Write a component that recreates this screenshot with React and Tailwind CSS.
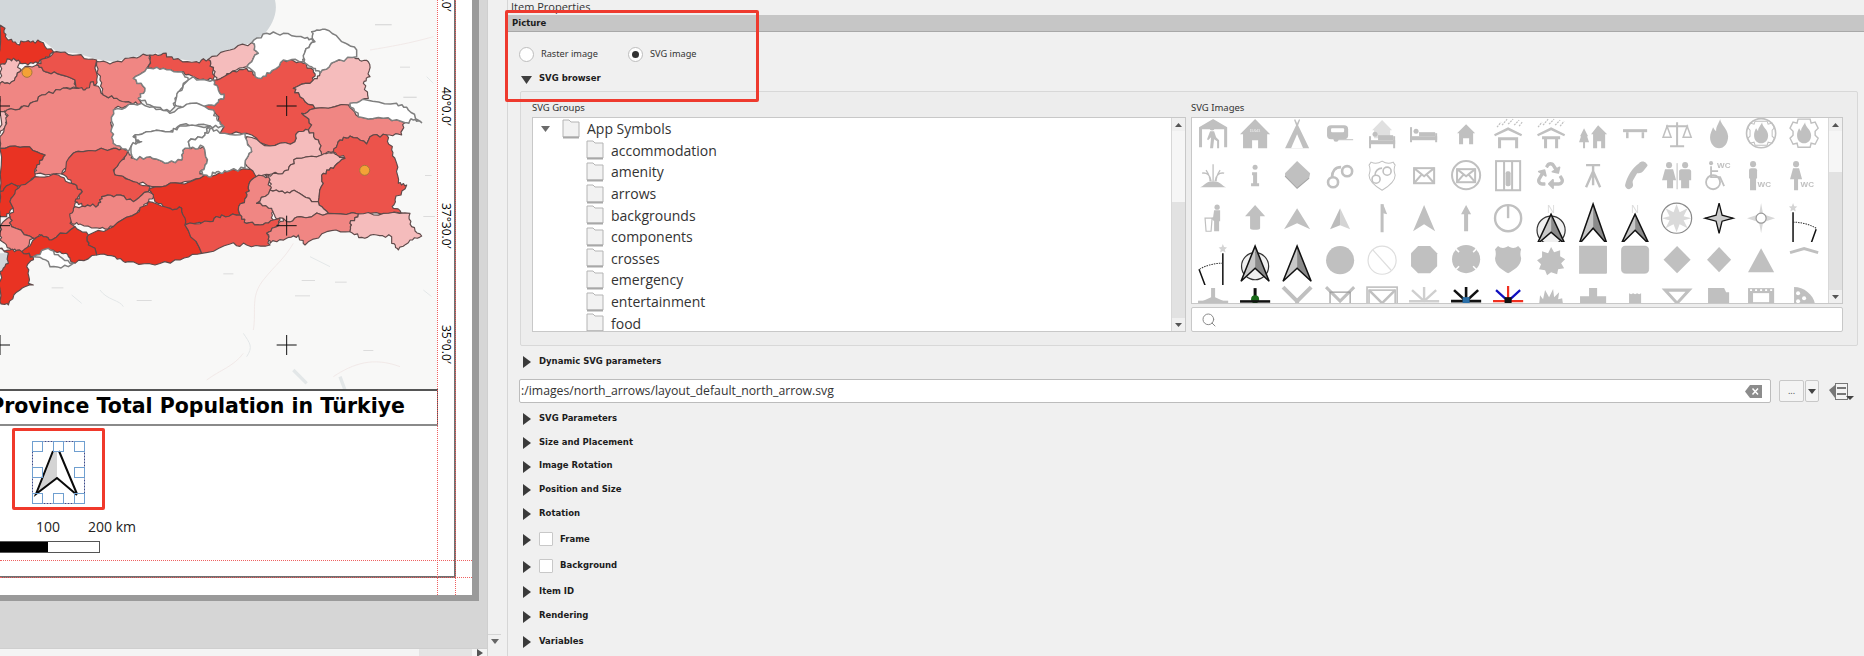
import React from 'react';
import { Search } from 'lucide-react';
import { FaRecycle } from 'react-icons/fa';

// province shapes, traced in 3x map coordinates
const DARK = '#e93323';
const RED = '#ec534b';
const SALMON = '#f08683';
const PINK = '#f5bcbc';
const WHITE = '#ffffff';

const provinces = [
  [DARK, '0,75 15,85 20,115 50,132 85,122 120,125 160,155 135,178 100,190 60,190 45,178 0,195'],
  [PINK, '0,195 30,178 55,180 60,215 35,245 0,250'],
  [SALMON, '0,250 35,245 60,215 75,200 110,195 130,212 170,220 225,240 232,265 180,270 125,285 85,320 35,330 0,335'],
  [RED, '110,195 135,175 170,155 230,165 290,180 290,240 275,265 250,270 228,262 225,240 170,220 130,212'],
  [PINK, '0,335 20,335 20,375 0,400'],
  [SALMON, '20,330 85,320 125,285 180,270 230,265 255,270 280,245 310,285 350,295 395,312 345,325 335,380 340,430 385,450 340,445 250,455 215,465 215,490 185,522 105,522 110,495 135,465 75,440 0,445 0,410 20,370'],
  [SALMON, '290,185 340,187 400,172 450,165 450,190 440,205 400,235 435,265 415,295 425,310 395,310 350,295 310,285 300,240'],
  [RED, '450,165 490,160 520,178 590,185 625,178 640,210 640,240 590,235 570,225 545,215 490,205 445,205'],
  [PINK, '625,178 690,150 755,128 775,160 740,200 690,220 650,240 640,210'],
  [WHITE, '400,235 440,205 490,205 545,215 565,240 550,250 525,295 525,320 510,335 460,320 415,295 435,265'],
  [WHITE, '565,240 580,230 590,240 640,240 655,270 672,290 650,310 610,320 570,310 545,325 525,310 530,290 550,255'],
  [WHITE, '340,330 400,312 460,320 510,340 575,310 640,330 650,355 672,380 630,378 540,375 510,395 440,395 400,410 420,425 395,435 385,455 340,430 335,385'],
  [WHITE, '395,435 425,425 400,410 440,395 510,395 540,378 630,378 615,405 565,425 570,445 555,445 545,480 495,490 450,470 400,475'],
  [SALMON, '385,455 400,475 450,470 495,490 545,480 555,445 565,445 610,440 620,490 600,515 615,535 540,550 470,560 400,545 340,520 345,505'],
  [WHITE, '565,425 615,405 630,385 660,400 735,400 755,455 735,490 735,505 680,515 650,515 625,530 600,515 620,490 610,440 570,445'],
  [DARK, '0,445 75,440 135,465 110,495 105,530 60,565 35,550 0,575'],
  [DARK, '0,575 35,550 55,560 30,605 40,625 20,650 0,650'],
  [RED, '30,605 55,565 105,530 175,525 215,550 247,575 225,610 210,670 225,680 155,720 125,705 100,715 35,680 30,650 40,625'],
  [RED, '215,465 250,455 340,445 385,450 340,510 345,525 400,545 450,560 445,575 400,605 350,585 305,590 295,615 255,620 225,605 247,575 215,550 185,522'],
  [SALMON, '210,650 225,620 255,620 295,615 305,590 350,585 400,605 445,575 465,585 440,610 410,640 340,680 300,685 240,672 215,670'],
  [DARK, '450,565 470,560 540,550 600,535 680,515 765,508 768,530 745,560 740,590 715,630 720,645 665,645 630,665 550,672 545,625 510,625 465,605 460,590'],
  [DARK, '265,705 340,680 410,640 445,605 510,625 545,625 555,675 605,760 540,780 465,795 385,785 345,770 290,765 285,745 265,735'],
  [DARK, '65,755 125,705 155,720 225,680 265,705 265,735 285,745 290,765 225,790 205,770 180,755 145,745 100,770'],
  [WHITE, '100,770 145,745 180,770 220,790 205,800 150,800 145,785'],
  [SALMON, '0,680 30,650 35,680 100,715 65,755 30,745 0,720'],
  [DARK, '0,745 30,750 65,755 100,770 80,800 85,850 100,855 60,870 25,915 0,905 0,815 25,790 25,760'],
  [RED, '640,240 690,220 740,205 775,235 810,220 850,180 900,185 940,210 940,240 880,265 900,290 945,325 905,340 935,375 925,390 890,400 885,425 810,438 740,400 660,400 672,380 650,345 610,320 650,310 672,290 655,270'],
  [WHITE, '740,200 775,160 755,128 800,100 850,100 915,115 945,125 915,155 910,185 850,180 810,220 775,235'],
  [WHITE, '945,125 935,95 975,88 1025,125 1070,150 1070,170 1005,185 960,220 940,205 912,185 915,155'],
  [PINK, '880,265 940,240 960,220 1005,185 1050,162 1075,175 1105,185 1110,230 1090,250 1105,295 1045,315 945,325 900,290'],
  [WHITE, '1050,310 1100,300 1190,310 1225,330 1265,368 1240,360 1215,368 1150,355 1075,350'],
  [SALMON, '905,340 945,325 1045,315 1075,350 1150,355 1215,368 1205,405 1160,405 1110,410 1100,432 1050,408 1020,420 1000,455 965,465 955,420 925,390 935,375'],
  [PINK, '740,410 810,438 885,425 890,400 925,390 955,420 965,465 890,475 865,510 835,522 790,525 770,532 735,490 755,455'],
  [PINK, '795,525 835,522 865,510 890,475 965,465 1000,458 1035,475 1000,505 970,520 970,550 955,605 935,605 890,575 855,580 810,570 810,540'],
  [RED, '1000,455 1020,420 1050,408 1100,432 1110,410 1160,405 1175,450 1190,490 1195,550 1220,555 1185,600 1180,625 1210,640 1075,642 985,640 955,605 970,550 970,520 1000,505 1035,475'],
  [SALMON, '745,560 768,530 805,530 810,570 770,610 815,625 820,660 780,675 740,670 720,645 715,630 740,590'],
  [PINK, '770,610 810,570 855,580 890,575 935,605 955,605 985,640 900,650 860,665 825,650 815,625'],
  [RED, '555,675 630,665 665,645 720,645 740,670 780,675 820,660 840,655 830,680 800,700 810,735 740,735 690,732 605,760'],
  [SALMON, '800,700 830,680 850,655 860,665 900,650 985,640 1075,642 1050,670 1050,695 980,695 915,735 895,705 860,715 810,730'],
  [PINK, '1050,670 1075,642 1150,640 1230,640 1235,680 1265,708 1230,720 1195,750 1175,730 1175,710 1130,705 1085,712 1050,695'],
];

// rough up the borders: shared edges get the same wobble because the noise hangs on the sorted end points
const noise = (a, b) => {
  const s = Math.sin(a * 12.9898 + b * 78.233) * 43758.5453;
  return s - Math.floor(s) - 0.5;
};
const wobble = (points) => {
  const pts = points.split(' ').map((p) => p.split(',').map(Number));
  const out = [];
  pts.forEach((p, i) => {
    const q = pts[(i + 1) % pts.length];
    out.push(p.join(','));
    const swap = p[0] > q[0] || (p[0] === q[0] && p[1] > q[1]);
    const [a, b] = swap ? [q, p] : [p, q];
    const dx = b[0] - a[0];
    const dy = b[1] - a[1];
    const len = Math.hypot(dx, dy);
    if (len < 25) return;
    const mids = [0.2, 0.4, 0.6, 0.8].map((t, k) => {
      const off = noise(a[0] + k * 7 + t, a[1] + b[0] * 0.37 + b[1] * 0.11) * 11;
      return `${(a[0] + dx * t - (dy / len) * off).toFixed(1)},${(a[1] + dy * t + (dx / len) * off).toFixed(1)}`;
    });
    out.push(...(swap ? mids.reverse() : mids));
  });
  return out.join(' ');
};
const roughProvinces = provinces.map(([fill, points]) => [fill, wobble(points)]);

const Cross = ({ x, y }) => <path d={`M${x - 30} ${y}H${x + 30}M${x} ${y - 30}V${y + 30}`} stroke="#111" strokeWidth="3" fill="none" />;

const MapDrawing = () => (
  <svg width="437" height="389" viewBox="0 0 1311 1167" className="block shrink-0 bg-[#f8f8f7]">
    <g className="blur-[0.35px]">
      <g fill="none" stroke="#efe6e4" strokeWidth="2.500">
        <path d="M760 990c10-60-10-100 30-150s60-60 90-110" />
        <path d="M1110 150c60-10 120-20 190-40M1000 1130c60-40 120-60 200-30M620 1140c40-30 80-40 110-80" />
      </g>
      <g fill="none" stroke="#e3e7e8" strokeWidth="3">
        <path d="M300 870c20 30 60 30 70 50M730 1000c20 30 30 40 10 70M215 885l30 25M1280 230l20 20M930 770l60 30M1270 870l25 20" />
        <path d="M880 1110l40 40M1020 1130l15 40" strokeWidth="10" />
      </g>
      <g fill="#dcdcdc">
        <rect x="1125" y="72" width="50" height="4" /><rect x="1210" y="290" width="40" height="4" /><rect x="1200" y="200" width="30" height="3" />
        <rect x="155" y="862" width="35" height="3" /><rect x="410" y="900" width="45" height="3" /><rect x="905" y="840" width="40" height="3" />
        <rect x="1005" y="845" width="35" height="3" /><rect x="885" y="886" width="45" height="3" /><rect x="1090" y="1050" width="30" height="3" />
        <rect x="670" y="820" width="30" height="3" /><rect x="1275" y="525" width="20" height="3" /><rect x="1270" y="648" width="35" height="3" />
      </g>
      <path d="M0 0H825C835 40 815 75 795 100L755 128 690 150 625 178 590 185 520 175 470 160 400 172 340 185 290 178 230 160 170 155 130 122 80 125 50 130 20 110 0 70Z" fill="#d2d7da" />
      <path d="M0 760H25L30 790 0 815Z" fill="#d2d7da" />
      <g strokeWidth="3.500" strokeLinejoin="round">
        {roughProvinces.filter(([fill]) => fill !== WHITE).map(([fill, points], i) => (
          <polygon key={i} points={points} fill={fill} stroke="#5f4a4a" />
        ))}
        {roughProvinces.filter(([fill]) => fill === WHITE).map(([fill, points], i) => (
          <polygon key={i} points={points} fill={fill} stroke="#7f7f7f" strokeWidth="4.500" />
        ))}
      </g>
      <circle cx="81" cy="217" r="15" fill="#f4a236" stroke="#a9773a" strokeWidth="3" />
      <circle cx="1094" cy="511" r="15" fill="#f4a236" stroke="#a9773a" strokeWidth="3" />
    </g>
    <Cross x={860} y={318} />
    <Cross x={860} y={677} />
    <Cross x={860} y={1035} />
    <Cross x={0} y={318} />
    <Cross x={0} y={677} />
    <Cross x={0} y={1035} />
  </svg>
);

const NorthArrowSelected = () => (
  <svg width="53" height="63" viewBox="0 0 53 63" className="absolute left-[32px] top-[15px]">
    <rect x="0.5" y="0.5" width="52" height="62" fill="#fff" stroke="#3b4a8a" strokeDasharray="2 1" />
    <path d="M21 10H25V37L4 53Z" fill="#d4d4d4" />
    <path d="M21 10 4 53 25 37 45 54M27 10 45 53" fill="none" stroke="#0a0a0a" strokeWidth="2" />
    {[[0, 0], [21, 0], [42, 0], [0, 26], [42, 26], [0, 52], [21, 52], [42, 52]].map(([x, y]) => (
      <rect key={`${x}-${y}`} x={x + 0.5} y={y + 0.5} width="10" height="10" fill="none" stroke="#6f9fd0" />
    ))}
  </svg>
);

const gridLabel = "shrink-0 font-['Open_Sans',sans-serif] text-[12px] leading-[14px] text-black [writing-mode:vertical-rl]";

const Layout = () => (
  <div className="relative h-[601px] w-[479px] shrink-0 overflow-hidden border-r-[7px] border-b-[6px] border-[#9a9a9a] bg-white">
    <div className="flex h-[578px] w-[456px] flex-col border-r-2 border-b-2 border-[#707070]">
      <div className="flex h-[389px] shrink-0">
        <MapDrawing />
        <div className="flex flex-1 flex-col items-center overflow-hidden">
          <span className={`-mt-[34px] h-[44px] ${gridLabel}`}>42°30.0′</span>
          <span className={`mt-[77px] h-[38px] ${gridLabel}`}>40°0.0′</span>
          <span className={`mt-[78px] h-[44px] ${gridLabel}`}>37°30.0′</span>
          <span className={`mt-[78px] h-[40px] ${gridLabel}`}>35°0.0′</span>
        </div>
      </div>
      <div className="flex h-[37px] w-[438px] shrink-0 items-center justify-end overflow-hidden border-t-2 border-b-2 border-r border-t-[#555555] border-b-[#8a8a8a] border-r-[#555555] pr-[32px] pb-[3px] font-['DejaVu_Sans',sans-serif] text-[20.500px] font-bold whitespace-nowrap text-black">
        Province Total Population in Türkiye
      </div>
      <div className="relative flex-1">
        <div className="absolute left-[12px] top-[2px] h-[82px] w-[93px] rounded-[2px] border-[3px] border-[#f0392b]" />
        <NorthArrowSelected />
        <span className="absolute left-[36px] top-[92px] font-['Open_Sans',sans-serif] text-[14px] leading-[18px] text-[#222222]">100</span>
        <span className="absolute left-[88px] top-[92px] font-['Open_Sans',sans-serif] text-[14px] leading-[18px] text-[#222222]">200 km</span>
        <div className="absolute left-0 top-[115px] flex h-[12px] w-[100px] border border-l-0 border-[#555555]">
          <div className="w-[48px] bg-black" />
        </div>
      </div>
    </div>
    {/* page guides */}
    <div className="absolute left-0 top-[560px] w-full border-t border-dotted border-[#f06060]" />
    <div className="absolute left-0 top-[577px] w-full border-t border-dotted border-[#f06060]" />
    <div className="absolute left-[437px] top-0 h-full border-l border-dotted border-[#f06060]" />
    <div className="absolute left-[455px] top-0 h-full border-l border-dotted border-[#f06060]" />
  </div>
);

// ---- SVG browser icons, 42 x 42 cells
const wc = (x, y, size = 8) => (
  <text x={x} y={y} fontSize={size} fontWeight="700" fontFamily="'Liberation Sans', sans-serif">WC</text>
);
const Stroke = ({ children, w = 2, color = '#c0c0c0' }) => (
  <g fill="none" stroke={color} strokeWidth={w}>{children}</g>
);
const flame = <path d="M22 7c0 5 6 7 6 13 0 5-3 8-7 8s-7-3-7-8c0-3 1-5 2-7l2 3c0-4 3-6 4-9z" />;
const darkArrow = (top, bottom, mid) => (
  <g strokeLinejoin="miter">
    <path d={`M21 ${top}L7 ${bottom}L21 ${mid}Z`} fill="#c8c8c8" />
    <path d={`M21 ${top}L35 ${bottom}L21 ${mid}Z`} fill="#8a8a8a" />
    <path d={`M21 ${top}L7 ${bottom}L21 ${mid}L35 ${bottom}Z`} fill="none" stroke="#111" strokeWidth="1.5" />
  </g>
);

const icons = [
  // row 1
  <><path d="M7 12 21 4 35 12v20h-3V14H10v18H7z" /><circle cx="20" cy="13" r="2.4" /><path d="M18 16h4l2 6 3 3v8h-2v-7l-3-2-1 9h-3l1-11-3 3-1-1z" /></>,
  <><path d="M6 19 21 4l15 15h-3v14h-9v-8h-6v8H9V19z" /><text x="21" y="17" fontSize="5" fill="#eeeeee" textAnchor="middle" fontFamily="'Liberation Serif', serif">B&amp;B</text></>,
  <><path d="M19 4l2 4 2-4 1 1-2 5 11 23H9L20 10l-2-5z" /><path d="M21 19l6 14H15z" fill="#fff" /></>,
  <><rect x="8" y="10" width="21" height="14" rx="4" /><rect x="12" y="13" width="13" height="4" rx="1" fill="#fff" /><circle cx="17" cy="24" r="2.5" /><rect x="17" y="24" width="17" height="1" /></>,
  <><path d="M21 5l10 10h-2v8H13v-8h-2z" fill="#e0e0e0" /><rect x="8" y="21" width="2" height="12" /><rect x="32" y="21" width="2" height="12" /><rect x="8" y="25" width="26" height="4" /><circle cx="14" cy="19" r="2.5" /><rect x="17" y="20" width="15" height="5" /></>,
  <><rect x="7" y="12" width="2" height="15" /><rect x="32" y="18" width="2" height="9" /><rect x="7" y="21" width="27" height="4" /><circle cx="13" cy="16" r="2.5" /><rect x="16" y="17" width="16" height="4" /></>,
  <path d="M21 9l9 9h-2v11h-4v-6h-6v6h-4V18h-2z" />,
  <><path d="M7 19 21 12l14 7-1 2-13-6-13 6z" /><path d="M11 22h20v11h-3v-8H14v8h-3z" /><Stroke w={1.2}><path d="M10 12l4-5M15 10l5-6M21 9l5-5M27 10l5-5M32 11l3-4" strokeDasharray="2 1" /></Stroke></>,
  <><path d="M7 19 21 12l14 7-1 2-13-6-13 6z" /><path d="M12 21h18v3h-2v9h-3v-9h-8v9h-3v-9h-2z" /><Stroke w={1.2}><path d="M8 12l4-5M13 10l5-6M19 9l5-5M25 10l5-5M30 11l4-5" strokeDasharray="2 1" /></Stroke></>,
  <><path d="M12 13l4 8h-1l2 6h-4v6h-2v-6H7l2-6H8z" /><path d="M26 10l9 9h-2v14h-4v-7h-4v7h-4V19h-2z" /></>,
  <><rect x="9" y="14" width="24" height="3" /><rect x="12" y="17" width="2.5" height="6" /><rect x="27.5" y="17" width="2.5" height="6" /></>,
  <Stroke w={1.5}><path d="M21 7v23M10 11h22M14 31h14" strokeWidth="2" /><path d="M11 11l-4 11h8zM31 11l-4 11h8z" /></Stroke>,
  <path d="M22 4c1 6 7 9 8 17 0 7-4 12-9 12s-9-5-9-11c0-4 2-7 3-10 1 2 2 3 3 4 0-5 3-8 4-12z" />,
  <><Stroke w={1.6}><circle cx="21" cy="18" r="14.500" /><path d="M15 6h12l1 3 4-1 2 5-2 2v6l2 2-2 5-4-1-1 3H15l-1-3-4 1-2-5 2-2v-6l-2-2 2-5 4 1z" strokeWidth="1" /></Stroke>{flame}</>,
  <><Stroke w={1.4}><path d="M15 4h12l1 4 4-1 3 6-3 3v4l3 3-3 6-4-1-1 4H15l-1-4-4 1-3-6 3-3v-4l-3-3 3-6 4 1z" /></Stroke>{flame}</>,
  // row 2
  <><path d="M8 30c4-1 5-6 13-6s9 5 13 6z" /><Stroke w={1.3}><path d="M21 24V7M19 24c-1-6-4-9-9-8M23 24c1-6 4-9 9-8M18 24c0-4-2-8-4-11M24 24c0-4 2-8 4-11" /></Stroke></>,
  <><circle cx="21" cy="10" r="2.5" /><path d="M18 15h5v11h2v3h-8v-3h2v-8h-1z" /></>,
  <><path d="M21 4l13 12-1 5-12 10L9 19v-3z" /><path d="M9 19l12 12 12-10" fill="none" stroke="#a6a6a6" /></>,
  <Stroke w={2.6}><circle cx="14" cy="25" r="5" /><circle cx="28" cy="14" r="5" /><path d="M13 20c0-6 3-10 9-10" /></Stroke>,
  <Stroke w={1.6}><path d="M10 5c4 2 8 1 11-1 3 2 7 3 11 1l2 3c-2 4-1 7 0 10 0 7-8 12-13 15-5-3-13-8-13-15 1-3 2-6 0-10z" strokeWidth="1" /><circle cx="15" cy="22" r="4" /><circle cx="26" cy="14" r="4" /><path d="M14 18c0-4 3-7 7-7" /></Stroke>,
  <Stroke w={2}><rect x="11" y="11" width="20" height="15" /><path d="M11 11l10 8 10-8M11 26l7-8M31 26l-7-8" /></Stroke>,
  <Stroke w={2}><circle cx="21" cy="18" r="14" /><rect x="12" y="12" width="18" height="13" /><path d="M12 12l9 7 9-7M12 25l6-7M30 25l-6-7" /></Stroke>,
  <><Stroke w={2}><rect x="9" y="4" width="24" height="29" /><path d="M17 4v29M25 4v29" /></Stroke><rect x="18.5" y="14" width="5" height="15" rx="2" /></>,
  <FaRecycle size={27} color="#c0c0c0" className="-translate-y-[3px]" />,
  <Stroke w={2.4}><path d="M14 8h14M21 9v8M21 14l-7 16M21 14v14M21 14l7 16" /></Stroke>,
  <path d="M32 6c-2-2-5-2-7 0-7 5-12 13-14 22 0 2 2 4 4 4 2-1 4-2 4-4 0-2-1-3 0-5l4-7c2 0 4 0 6-2l4-5c1-1 0-2-1-3z" />,
  <><circle cx="13" cy="8" r="3" /><path d="M9 12h8l3 11h-3v8h-6v-8H6z" /><rect x="20.5" y="6" width="1" height="26" /><circle cx="29" cy="8" r="3" /><path d="M25 12h8c1 0 2 1 2 2v9h-2v8h-8v-8h-2v-9c0-1 1-2 2-2z" /></>,
  <><Stroke w={1.8}><circle cx="15" cy="25" r="7" /><path d="M13 9v11h9l4 9M13 14h7" /></Stroke><circle cx="13" cy="6" r="2" />{wc(19, 11)}</>,
  <><circle cx="13" cy="7" r="3" /><rect x="9" y="11" width="8" height="11" rx="2" /><rect x="10" y="21" width="6" height="12" />{wc(17.500, 30)}</>,
  <><circle cx="13" cy="7" r="3" /><path d="M10 11h6l3 11h-4v11h-4V22H7z" />{wc(17.500, 30)}</>,
  // row 3
  <><circle cx="25" cy="7" r="2.6" /><path d="M22 10h6v11h-1v10h-5V21l-3-3 2-1z" /><Stroke w={1.2}><path d="M13 18h7l-1 13h-5z" /></Stroke></>,
  <path d="M21 5l10 11h-5v12c0 2-10 2-10 0V16h-5z" />,
  <path d="M21 8l13 21-13-6-13 6z" />,
  <><path d="M21 8l10 21-10-4z" fill="#d4d4d4" /><path d="M21 8L11 29l10-4z" fill="#bcbcbc" /></>,
  <><rect x="19.5" y="4" width="3" height="28" /><path d="M22 4l4 10-4-1z" /></>,
  <path d="M21 5l11 26-11-7-11 7z" />,
  <path d="M21 5l5 9h-3v17h-4V14h-3z" />,
  <Stroke w={2.4}><circle cx="21" cy="18" r="13" /><path d="M21 5v13" /></Stroke>,
  <><text x="21" y="13" fontSize="11" fill="#dddddd" textAnchor="middle" fontFamily="'Liberation Sans', sans-serif">N</text><circle cx="21" cy="30" r="14" fill="#f0f0f0" stroke="#333" strokeWidth="1.2" />{darkArrow(14, 44, 32)}</>,
  darkArrow(4, 44, 28),
  <><text x="21" y="13" fontSize="11" fill="#dddddd" textAnchor="middle" fontFamily="'Liberation Sans', sans-serif">N</text>{darkArrow(14, 44, 30)}</>,
  <><circle cx="20.5" cy="18" r="15" fill="none" stroke="#8a8a8a" strokeWidth="1.2" /><path d="M20.5 4l3 8 8-4-4 8 8 2-8 2 4 8-8-4-3 8-3-8-8 4 4-8-8-2 8-2-4-8 8 4z" fill="#dadada" /></>,
  <path d="M21 3l3 12 11 3-11 3-3 12-3-12-11-3 11-3z" fill="#cccccc" stroke="#111" strokeWidth="1.3" />,
  <><path d="M21 3l2 11 12 4-12 4-2 11-2-11-12-4 12-4z" fill="#d8d8d8" /><circle cx="21" cy="18" r="5" fill="#fff" stroke="#999" strokeWidth="1.2" /></>,
  <><path d="M10 3l1.2 3 3 .3-2.2 2 .7 3-2.7-1.500-2.700 1.500.7-3-2.200-2 3-.3z" fill="#d4d4d4" /><path d="M10 12v31M33 29l-5 14" stroke="#111" strokeWidth="1.500" fill="none" /><path d="M10 22c8 0 16 2 23 6" stroke="#333" strokeWidth="1" strokeDasharray="1.500 1" fill="none" /></>,
  // row 4
  <><path d="M30.700 2l1.200 3 3 .3-2.200 2 .7 3-2.700-1.500-2.700 1.500.7-3-2.200-2 3-.3z" fill="#d4d4d4" /><path d="M30.700 11v32M7 27l6 16" stroke="#111" strokeWidth="1.500" fill="none" /><path d="M30.700 21c-8 0-17 2-23 6" stroke="#333" strokeWidth="1" strokeDasharray="1.500 1" fill="none" /></>,
  <><circle cx="21" cy="24" r="13.500" fill="#f0f0f0" stroke="#333" strokeWidth="1.200" />{darkArrow(4, 39, 26)}</>,
  darkArrow(4, 39, 26),
  <circle cx="21" cy="18" r="14" />,
  <Stroke w={1.200} color="#dedede"><circle cx="21" cy="18" r="14" /><path d="M12 8l18 20" /></Stroke>,
  <path d="M15 4h12l7 7v13l-7 7H15l-7-7V11z" />,
  <><circle cx="21" cy="17" r="14" /><path d="M11 7l3 3M31 7l-3 3M11 27l3-3M31 27l-3-3" stroke="#fff" strokeWidth="1.500" /></>,
  <path d="M21 4c2 2 7 3 10 0l3 3c-1 3-1 6 0 9 0 8-8 12-13 15-5-3-13-7-13-15 1-3 1-6 0-9l3-3c3 3 8 2 10 0z" />,
  <path d="M21 5l3 5 6-2 0 6 5 3-4 4 3 5-6 1-1 5-6-2-4 3-2-5-6-1 2-5-4-4 5-3 0-6 6 2z" />,
  <rect x="7.500" y="4" width="27" height="27" stroke="#b4b4b4" strokeWidth=".6" />,
  <rect x="7.500" y="4" width="27" height="27" rx="4" stroke="#b4b4b4" strokeWidth=".6" />,
  <path d="M21 4l13.500 13.500L21 31 7.500 17.500z" />,
  <path d="M21 5l12 12.500L21 30 9 17.500z" strokeLinejoin="round" />,
  <path d="M21 6l13 24H8z" />,
  <Stroke w={3}><path d="M7 10.500 21 6.500 35 10.500" /></Stroke>,
  // row 5
  <><path d="M19 3h4v9l11 5v3H8v-3l11-5z" /><rect x="6" y="15.500" width="30" height="3" /></>,
  <><rect x="19.500" y="3" width="3" height="13" fill="#111" /><circle cx="21" cy="14" r="4" fill="#1a6b1a" /><rect x="6" y="15" width="30" height="2.500" fill="#111" /></>,
  <Stroke w={4}><path d="M7 2l14 14 14-14M21 16v4" /></Stroke>,
  <><Stroke w={3}><path d="M7 2l14 14 14-14" /></Stroke><Stroke w={1.200} color="#9a9a9a"><rect x="11" y="7" width="20" height="14" /></Stroke></>,
  <Stroke w={1.600}><rect x="6" y="2" width="30" height="18" /><rect x="8" y="5" width="26" height="15" /><path d="M8 5l13 13 13-13" strokeWidth="2.500" /></Stroke>,
  <Stroke w={2.400} color="#cfcfcf"><path d="M21 2v15M9 5l12 11 12-11M6 16h30" /></Stroke>,
  <><Stroke w={2.600} color="#111"><path d="M21 2v14M9 5l12 11 12-11M6 16h30" /></Stroke><rect x="17.500" y="12" width="7" height="6" fill="#2a6fa8" /></>,
  <><Stroke w={2.200} color="#1010c0"><path d="M9 5l12 11 12-11" /></Stroke><Stroke w={2.200} color="#f03020"><path d="M21 1v13M6 16h30" /></Stroke><rect x="17.500" y="12" width="7" height="6" fill="#111" /></>,
  <path d="M9 20l1-10 3 4 2-9 4 7 4-8 1 8 5-5-1 7 4-1 1 7z" />,
  <path d="M17 3h8v8h9v9H8v-9h9z" />,
  <path d="M15 8l2 1 2-1 2 1 2-1 2 1 2-1v12H15z" />,
  <Stroke w={3}><path d="M9 5h24L21 18z" /></Stroke>,
  <path d="M10 3h16l2 4h3v13H10z" />,
  <><rect x="8" y="3" width="26" height="17" /><rect x="13" y="8" width="16" height="9" fill="#fff" /><path d="M10 5h2M15 5h2M20 5h2M25 5h2M30 5h2" stroke="#fff" strokeWidth="1.500" /></>,
  <><path d="M11 2c10 0 20 8 21 18H11z" /><circle cx="15" cy="8" r="2" fill="#fff" /><circle cx="21" cy="13" r="2" fill="#fff" /><circle cx="15" cy="16" r="2" fill="#fff" /></>,
];

const IconGrid = () => (
  <div className="grid h-[212px] -translate-y-[3px] grid-cols-[repeat(15,42.2px)] auto-rows-[42.4px]">
    {icons.map((icon, i) =>
      icon.type === FaRecycle ? (
        <div key={i} className="flex items-center justify-center">{icon}</div>
      ) : (
        <svg key={i} width="42.2" height="42.4" viewBox="0 0 42 42" fill="#c0c0c0" className="block blur-[0.3px]">
          {icon}
        </svg>
      ),
    )}
  </div>
);

// ---- small widgets
const TriDown = ({ className }) => (
  <svg width="11" height="8" viewBox="0 0 11 8" className={className}><path d="M0 0H11L5.500 8Z" fill="#3f3f3f" /></svg>
);
const TriRight = () => (
  <svg width="8" height="12" viewBox="0 0 8 12" className="mt-[2px] shrink-0"><path d="M0 0 8 6 0 12Z" fill="#3a3a3a" /></svg>
);

const Folder = () => (
  <svg width="18" height="20" viewBox="0 0 18 20" className="shrink-0">
    <path d="M1 1H7L9 3H17V18H1Z" fill="#f2f2f2" stroke="#b4b4b4" />
    <path d="M1 18.500H17" stroke="#a8a8a8" strokeWidth="2" />
  </svg>
);

const Scrollbar = ({ thumbClass, lowerClass }) => (
  <div className="flex w-[14px] shrink-0 flex-col border-l border-[#d8d8d8] bg-[#f0f0f0]">
    <div className="flex h-[13px] items-center justify-center">
      <svg width="7" height="4" viewBox="0 0 7 4"><path d="M0 4H7L3.500 0Z" fill="#555555" /></svg>
    </div>
    <div className={thumbClass} />
    <div className={lowerClass} />
    <div className="flex h-[13px] items-center justify-center">
      <svg width="7" height="4" viewBox="0 0 7 4"><path d="M0 0H7L3.500 4Z" fill="#555555" /></svg>
    </div>
  </div>
);

const folders = ['accommodation', 'amenity', 'arrows', 'backgrounds', 'components', 'crosses', 'emergency', 'entertainment', 'food'];

const TreeRow = ({ children }) => (
  <div className="flex h-[21.6px] shrink-0 items-center gap-[7px] font-['Open_Sans',sans-serif] text-[14px] text-[#333333]">
    <Folder />
    {children}
  </div>
);

const Tree = () => (
  <div className="flex h-[215px] border border-[#c8c8c8] bg-white">
    <div className="flex flex-1 flex-col overflow-hidden">
      <div className="flex items-center pl-[8px]">
        <svg width="9" height="6" viewBox="0 0 9 6" className="mr-[12px] shrink-0"><path d="M0 0H9L4.500 6Z" fill="#6b6b6b" /></svg>
        <TreeRow>App Symbols</TreeRow>
      </div>
      {folders.map((name) => (
        <div key={name} className="pl-[53px]">
          <TreeRow>{name}</TreeRow>
        </div>
      ))}
    </div>
    <Scrollbar thumbClass="h-[71px] bg-[#f6f6f6]" lowerClass="flex-1 bg-[#e2e2e2]" />
  </div>
);

const sectionLabel = "font-['DejaVu_Sans',sans-serif] text-[8.500px] font-bold whitespace-nowrap text-[#1c1c1c]";

const rows = [
  ['SVG Parameters', 'mt-[7px]', false],
  ['Size and Placement', 'mt-[8px]', false],
  ['Image Rotation', 'mt-[7.500px]', false],
  ['Position and Size', 'mt-[7.500px]', false],
  ['Rotation', 'mt-[8px]', false],
  ['Frame', 'mt-[10px]', true],
  ['Background', 'mt-[10.500px]', true],
  ['Item ID', 'mt-[9.500px]', false],
  ['Rendering', 'mt-[8.500px]', false],
  ['Variables', 'mt-[9.500px]', false],
];

const Section = ({ label, className, check }) => (
  <div className={`flex h-[16px] shrink-0 items-center pl-[15px] ${className}`}>
    <TriRight />
    <div className="flex items-center pl-[8px]">
      {check && <div className="mr-[7px] h-[14px] w-[14px] rounded-[1px] border border-[#c8c8c8] bg-white" />}
      <span className={sectionLabel}>{label}</span>
    </div>
  </div>
);

const Radio = ({ checked, children, className }) => (
  <div className={`flex items-center gap-[7px] ${className}`}>
    <div className="flex h-[15px] w-[15px] items-center justify-center rounded-full border border-[#bdbdbd] bg-white">
      {checked && <div className="h-[7px] w-[7px] rounded-full bg-[#333333]" />}
    </div>
    <span className="font-['Noto_Sans',sans-serif] text-[9.200px] text-[#333333]">{children}</span>
  </div>
);

const Panel = () => (
  <div className="flex h-full flex-1 flex-col overflow-hidden border-l border-[#d6d6d6] bg-[#f0f0f0]">
    <div className="h-[15px] shrink-0 pt-[1px] pl-[3px] font-['Open_Sans',sans-serif] text-[11px] leading-[12px] text-[#333333]">Item Properties</div>
    <div className="flex h-[17px] shrink-0 items-center border-b border-[#a8a8a8] bg-[#c6c6c6] pl-[4px]">
      <span className={sectionLabel}>Picture</span>
    </div>
    <div className="mt-[14px] flex h-[16px] shrink-0 items-center pl-[11px]">
      <Radio className="w-[109px]">Raster image</Radio>
      <Radio checked>SVG image</Radio>
    </div>
    <div className="mt-[8px] flex h-[16px] shrink-0 items-center pl-[13px]">
      <TriDown className="mt-[3px] mr-[7px] shrink-0" />
      <span className={sectionLabel}>SVG browser</span>
    </div>
    <div className="mt-[5px] ml-[12px] flex h-[255px] w-[1338px] shrink-0 gap-[5px] rounded-[2px] border border-[#d8d8d8] bg-[#ededed] pt-[9px] pl-[11px]">
      <div className="w-[654px] shrink-0">
        <div className="h-[16px] font-['Noto_Sans',sans-serif] text-[9.500px] text-[#333333]">SVG Groups</div>
        <Tree />
      </div>
      <div className="w-[652px] shrink-0">
        <div className="h-[16px] font-['Noto_Sans',sans-serif] text-[9.500px] text-[#333333]">SVG Images</div>
        <div className="flex h-[187px] border border-[#c8c8c8] bg-white">
          <div className="flex-1 overflow-hidden"><IconGrid /></div>
          <Scrollbar thumbClass="h-[41px] bg-[#f6f6f6]" lowerClass="flex-1 bg-[#e2e2e2]" />
        </div>
        <div className="mt-[3px] flex h-[25px] items-center rounded-[2px] border border-[#c8c8c8] bg-white pl-[9px]">
          <Search size={16} strokeWidth={1.500} color="#8a8a8a" />
        </div>
      </div>
    </div>
    <Section label="Dynamic SVG parameters" className="mt-[7px]" />
    <div className="mt-[10px] flex h-[24px] shrink-0 items-center pl-[11px]">
      <div className="flex h-[24px] w-[1252px] items-center justify-between rounded-[2px] border border-[#bcbcbc] bg-white pr-[8px] pl-[1px] font-['Open_Sans',sans-serif] text-[12.250px] text-[#333333]">
        <span>:/images/north_arrows/layout_default_north_arrow.svg</span>
        <svg width="17" height="13" viewBox="0 0 17 13"><path d="M5 0H17V13H5L0 6.500Z" fill="#8c8c8c" /><path d="M7.500 3.500 13 9.500M13 3.500 7.500 9.500" stroke="#fff" strokeWidth="1.500" /></svg>
      </div>
      <div className="ml-[8px] flex h-[22px] w-[25px] items-center justify-center rounded-[2px] border border-[#c8c8c8] bg-[#f4f4f4] text-[9px] leading-[12px] text-[#555555]">...</div>
      <div className="ml-[1px] flex h-[22px] w-[14px] items-center justify-center rounded-[2px] border border-[#c8c8c8] bg-[#f4f4f4]">
        <svg width="8" height="5" viewBox="0 0 8 5"><path d="M0 0H8L4 5Z" fill="#444444" /></svg>
      </div>
      <svg width="26" height="19" viewBox="0 0 26 19" className="ml-[10px]">
        <path d="M0 8 6 3V16Z" fill="#777777" />
        <rect x="6.500" y="1.500" width="12" height="16" fill="#f4f4f4" stroke="#777777" />
        <path d="M8 6H17M8 12H17" stroke="#777777" strokeWidth="2" />
        <path d="M17 14H25L21 18Z" fill="#444444" />
      </svg>
    </div>
    {rows.map(([label, className, check]) => (
      <Section key={label} label={label} className={className} check={check} />
    ))}
  </div>
);

const CanvasColumn = () => (
  <div className="flex w-[487px] shrink-0 flex-col bg-[#d6d6d6]">
    <Layout />
    <div className="flex-1" />
    <div className="flex h-[8px] shrink-0 border-t border-[#cfcfcf] bg-[#f4f4f4]">
      <div className="w-[419px]" />
      <div className="w-[53px] bg-[#e4e4e4]" />
      <svg width="6" height="8" viewBox="0 0 6 8" className="ml-[5px]"><path d="M0 0 6 4 0 8Z" fill="#555555" /></svg>
    </div>
  </div>
);

const SideStrip = () => (
  <div className="flex w-[20px] shrink-0 flex-col border-l border-[#cfcfcf] bg-[#f0f0f0]">
    <div className="mt-[634px] flex h-[14px] w-[13px] items-center justify-center border-t border-[#d4d4d4]">
      <svg width="8" height="5" viewBox="0 0 8 5"><path d="M0 0H8L4 5Z" fill="#666666" /></svg>
    </div>
  </div>
);

export default function App() {
  return (
    <div className="relative flex h-[656px] w-[1864px] overflow-hidden bg-[#f0f0f0]">
      <CanvasColumn />
      <SideStrip />
      <Panel />
      {/* annotation box from the original screenshot */}
      <div className="absolute left-[505px] top-[10px] h-[92px] w-[254px] rounded-[2px] border-[3px] border-[#ee3a2e]" />
    </div>
  );
}
